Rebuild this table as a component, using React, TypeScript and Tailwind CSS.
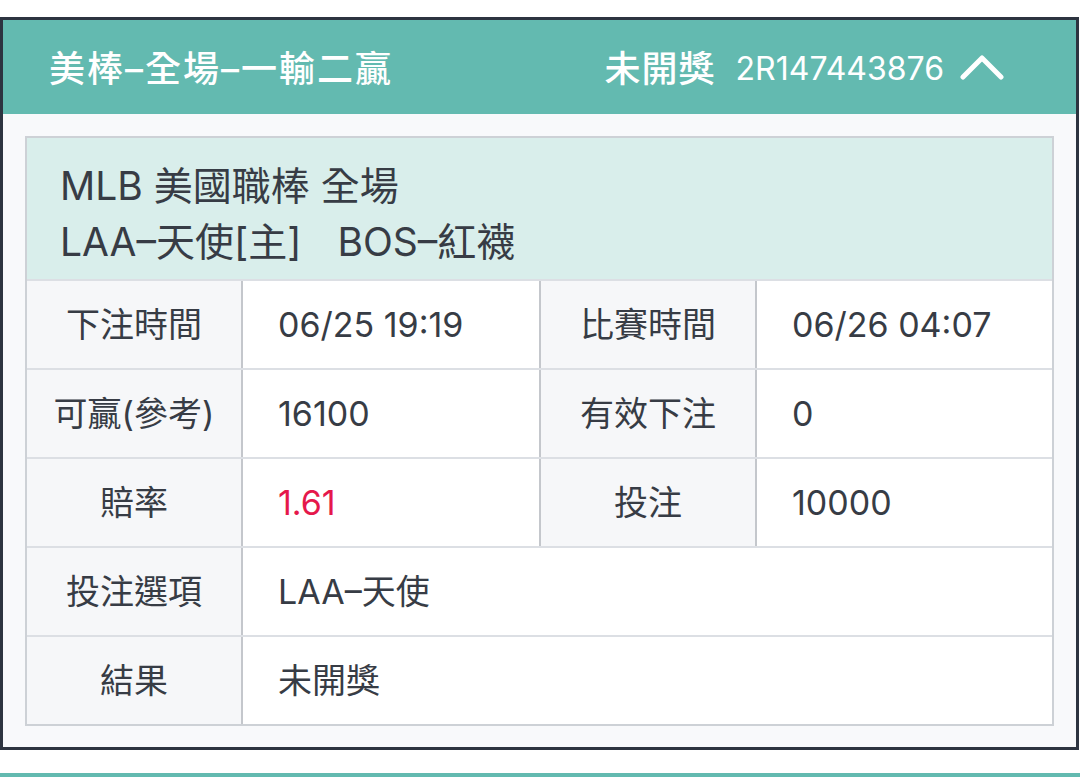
const font = { fontFamily: '"Inter", "Noto Sans CJK TC", sans-serif' };

type Cell = { label: string; value: string; red?: boolean };

function Row({ cells }: { cells: Cell[] }) {
  return (
    <div className="flex h-[89px] border-t-2 border-[#dcdfe4]">
      {cells.map((c, i) => (
        <div key={i} className={`flex ${cells.length === 1 ? "flex-1" : i === 0 ? "w-[512px]" : "flex-1"} ${i > 0 ? "border-l-2 border-[#c4c7cc]" : ""}`}>
          <div className="w-[214px] shrink-0 bg-[#f6f7f9] flex items-center justify-center text-[34px] text-[#373c45]">
            {c.label}
          </div>
          <div
            className={`flex-1 bg-white border-l-2 border-[#c4c7cc] flex items-center pl-[35px] text-[34px] ${
              c.red ? "text-[#e5184b]" : "text-[#373c45]"
            }`}
          >
            {c.value}
          </div>
        </div>
      ))}
    </div>
  );
}

export default function App() {
  return (
    <div className="min-h-screen bg-white pt-[17px] overflow-hidden" style={font}>
      <div className="w-[1079px] border-[3px] border-[#2d3440]">
        {/* Header */}
        <div className="h-[94px] bg-[#63bab0] flex items-center pt-[4px] pl-[46px] pr-[72px] text-white">
          <div className="text-[36px] font-medium tracking-[2px]">美棒–全場–一輸二贏</div>
          <div className="ml-auto flex items-center">
            <span className="text-[36px] font-medium tracking-[1px]">未開獎</span>
            <span className="ml-[20px] text-[32px]">2R147443876</span>
            <svg className="ml-[16px] -mt-[4px]" width="44" height="30" viewBox="0 0 44 30" fill="none">
              <path d="M3 25 L22 6 L41 25" stroke="white" strokeWidth="5" strokeLinecap="round" strokeLinejoin="round" />
            </svg>
          </div>
        </div>

        {/* Body */}
        <div className="bg-[#f8f9fb] px-[22px] pt-[22px] pb-[21px]">
          <div className="border-2 border-[#cdd1d6]">
            <div className="bg-[#d9eeeb] pl-[33px] pt-[20px] pb-[9px] text-[39px] leading-[56px] text-[#373c45]">
              <div>MLB 美國職棒 全場</div>
              <div>
                LAA–天使[主]<span className="ml-[36px]">BOS–紅襪</span>
              </div>
            </div>
            <Row cells={[{ label: "下注時間", value: "06/25 19:19" }, { label: "比賽時間", value: "06/26 04:07" }]} />
            <Row cells={[{ label: "可贏(參考)", value: "16100" }, { label: "有效下注", value: "0" }]} />
            <Row cells={[{ label: "賠率", value: "1.61", red: true }, { label: "投注", value: "10000" }]} />
            <Row cells={[{ label: "投注選項", value: "LAA–天使" }]} />
            <Row cells={[{ label: "結果", value: "未開獎" }]} />
          </div>
        </div>
      </div>
      <div className="mt-[23px] h-[4px] bg-[#63bab0]" />
    </div>
  );
}
